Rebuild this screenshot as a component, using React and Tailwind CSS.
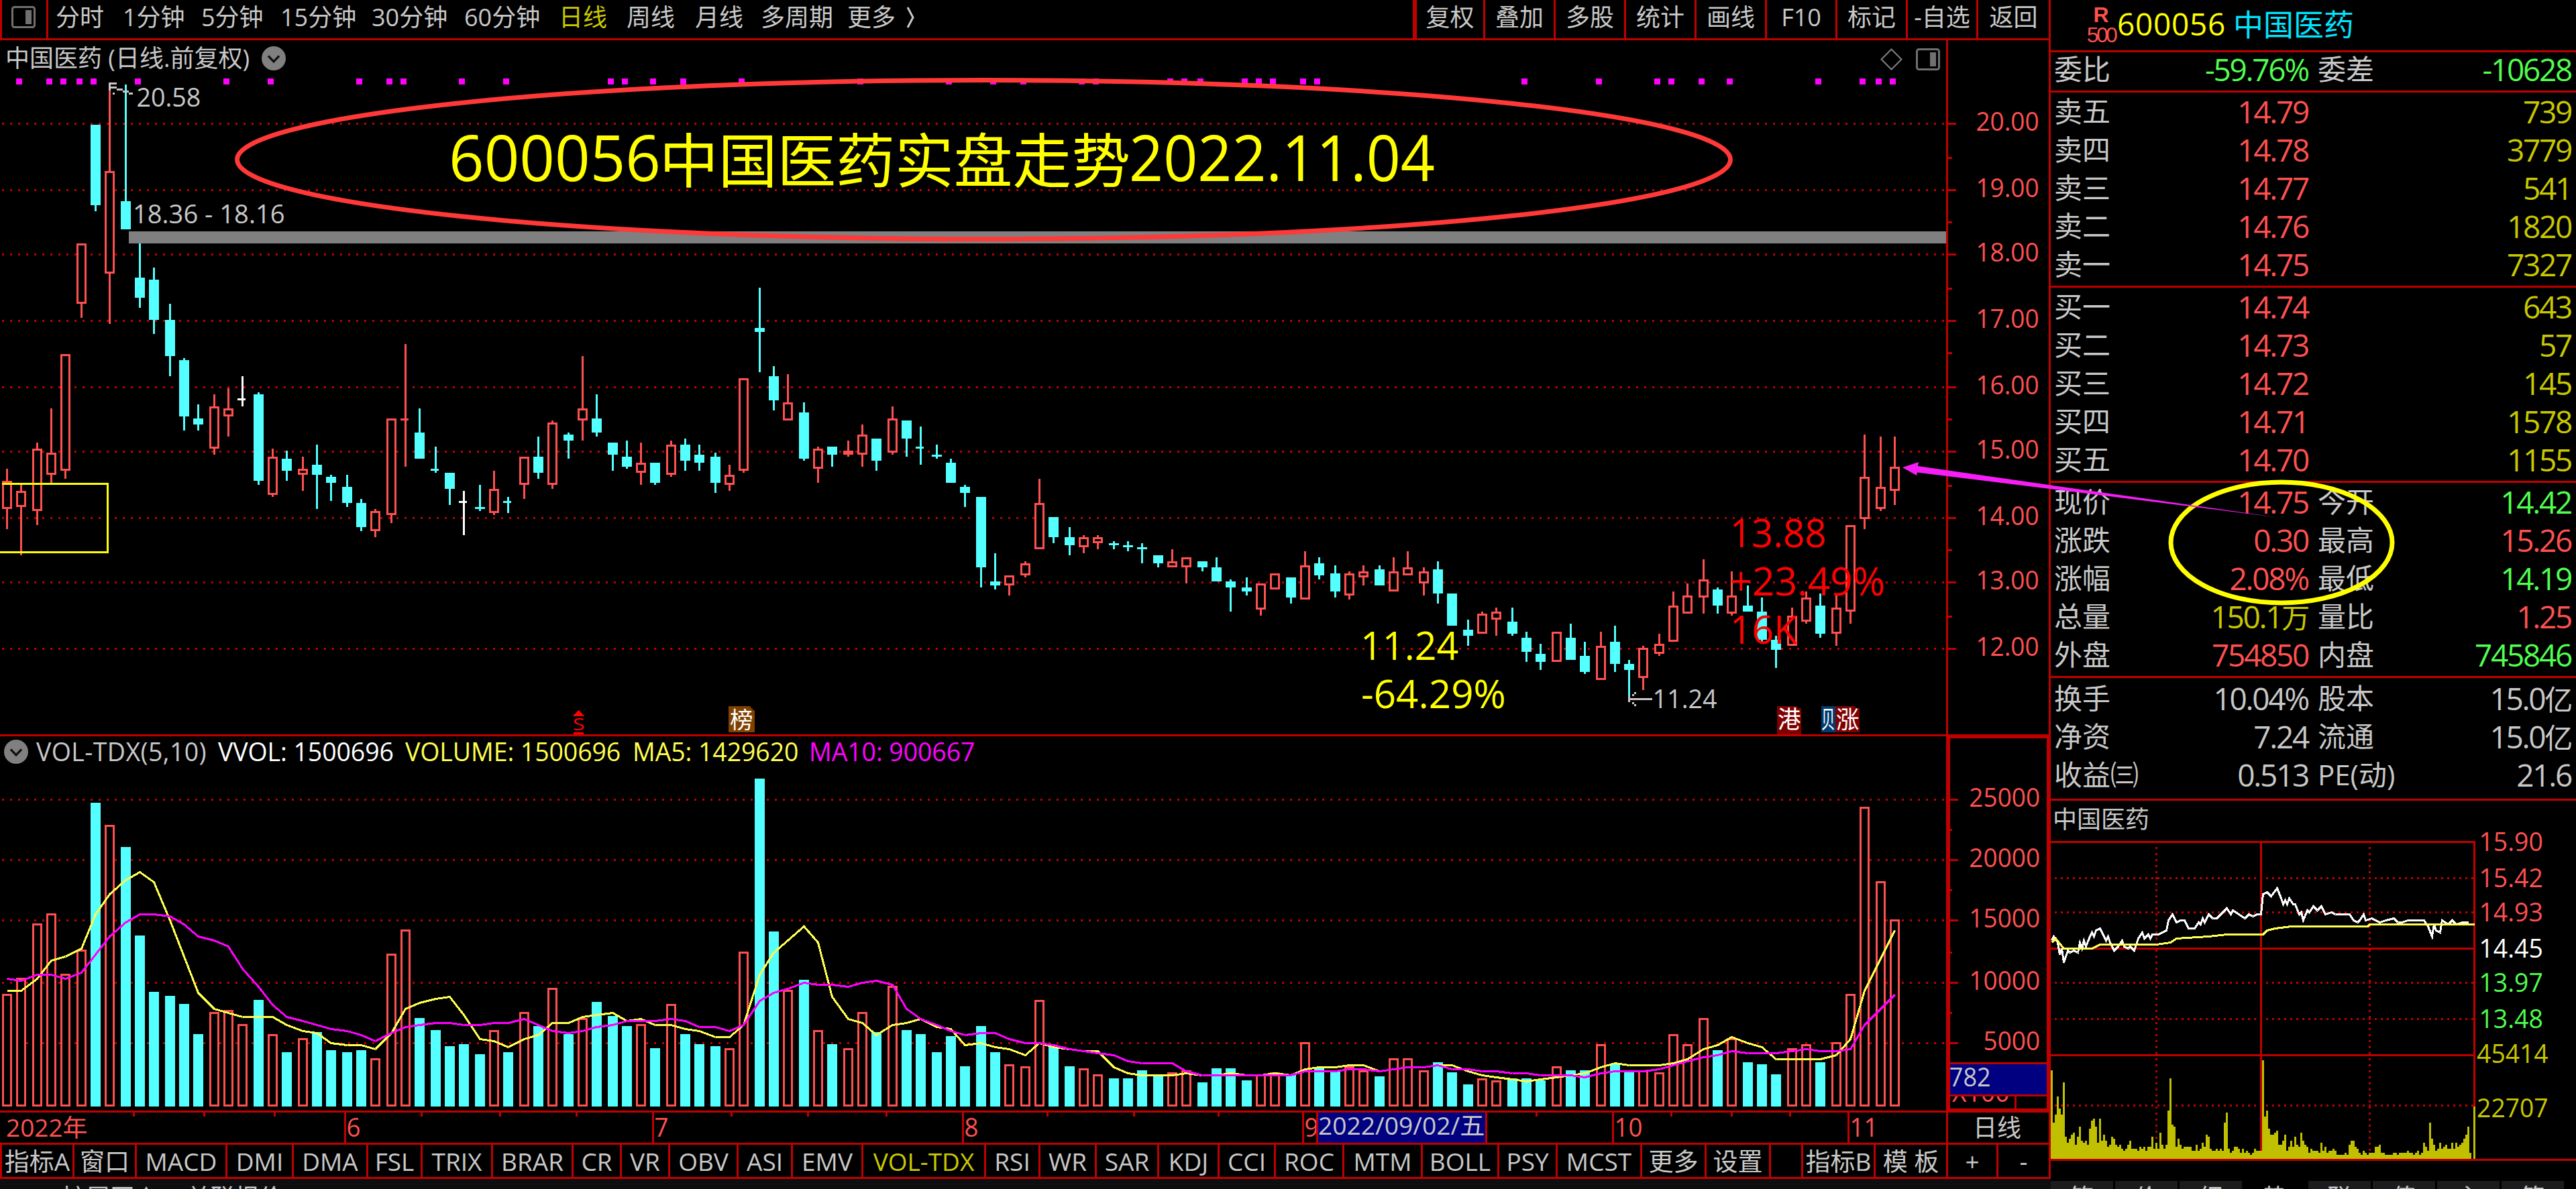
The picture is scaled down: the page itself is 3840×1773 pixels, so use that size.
// src/App.jsx
import React from 'react';

const FONT = "font-['Open_Sans','Noto_Sans_CJK_SC',sans-serif]";

const RED = '#c00000';
const UP = '#ff5050';
const DOWN = '#54ffff';
const GRAY = '#c8c8c8';

// [type, high, bodyTop, bodyBottom, low, volumeTop]
// r = up, c = down, R/C/W = doji with a short cross line
const bars = [
  ['r', 233, 239, 253, 263, 494], ['r', 241, 244, 252, 276, 486], ['r', 220, 223, 254, 261, 459],
  ['r', 203, 225, 236, 240, 454], ['r', 176, 176, 234, 238, 484], ['r', 121, 121, 151, 158, 472],
  ['c', 62, 62, 102, 105, 399], ['r', 45, 85, 136, 161, 410], ['c', 42, 100, 114, 114, 421],
  ['c', 121, 138, 148, 153, 465], ['c', 133, 139, 159, 166, 493], ['c', 151, 159, 177, 187, 495],
  ['c', 178, 179, 207, 214, 499], ['c', 201, 208, 211, 214, 514], ['r', 196, 202, 223, 226, 503],
  ['r', 193, 203, 207, 217, 502], ['W', 187, 198, 199, 202, 509], ['c', 195, 196, 239, 241, 497],
  ['r', 223, 227, 246, 247, 514], ['c', 224, 228, 234, 239, 523], ['r', 227, 233, 236, 244, 516],
  ['c', 221, 231, 236, 253, 513], ['c', 236, 237, 240, 249, 522], ['c', 236, 242, 250, 252, 523],
  ['c', 248, 250, 262, 264, 522], ['r', 253, 254, 264, 267, 526], ['r', 208, 208, 256, 260, 474],
  ['R', 171, 208, 209, 232, 462], ['c', 203, 215, 228, 228, 506], ['C', 222, 233, 234, 235, 512],
  ['c', 235, 235, 243, 251, 520], ['W', 244, 249, 250, 266, 519], ['c', 241, 252, 253, 254, 524],
  ['r', 234, 243, 255, 256, 512], ['C', 247, 249, 250, 255, 523], ['r', 227, 227, 241, 248, 503],
  ['c', 217, 227, 235, 238, 510], ['r', 209, 210, 241, 243, 491], ['c', 215, 216, 219, 228, 514],
  ['r', 177, 203, 209, 219, 506], ['c', 196, 208, 215, 217, 498], ['c', 220, 220, 226, 234, 505],
  ['c', 219, 227, 232, 233, 510], ['r', 220, 230, 235, 241, 509], ['c', 230, 230, 240, 241, 521],
  ['r', 219, 221, 236, 237, 499], ['c', 218, 221, 229, 234, 514], ['c', 221, 226, 230, 234, 519],
  ['c', 225, 227, 240, 245, 520], ['r', 231, 236, 241, 244, 521], ['r', 188, 188, 234, 235, 473],
  ['c', 143, 163, 165, 185, 387], ['c', 182, 187, 199, 204, 463], ['r', 186, 200, 209, 209, 492],
  ['c', 200, 205, 228, 229, 487], ['r', 222, 223, 233, 240, 512], ['c', 222, 222, 226, 232, 519],
  ['r', 219, 224, 226, 227, 521], ['r', 211, 216, 226, 232, 503], ['c', 218, 218, 229, 234, 513],
  ['r', 202, 208, 225, 226, 490], ['c', 209, 209, 218, 227, 512], ['C', 212, 222, 223, 231, 514],
  ['c', 221, 226, 227, 228, 523], ['c', 228, 230, 240, 240, 515], ['c', 241, 242, 245, 252, 530],
  ['c', 247, 247, 282, 292, 510], ['c', 275, 289, 291, 293, 523], ['r', 286, 286, 291, 296, 529],
  ['r', 279, 280, 286, 287, 530], ['r', 238, 250, 273, 273, 497], ['c', 257, 257, 267, 270, 520],
  ['c', 262, 267, 271, 276, 530], ['r', 266, 267, 272, 275, 531], ['r', 266, 267, 270, 273, 534],
  ['c', 269, 270, 271, 273, 536], ['c', 269, 271, 272, 274, 536], ['c', 270, 272, 273, 280, 532],
  ['c', 276, 276, 280, 282, 534], ['r', 273, 279, 282, 282, 533], ['r', 277, 277, 282, 290, 532],
  ['c', 279, 279, 282, 284, 538], ['c', 277, 282, 289, 289, 531], ['c', 288, 289, 292, 304, 531],
  ['c', 287, 292, 294, 296, 537], ['r', 290, 290, 303, 306, 534], ['r', 285, 285, 293, 293, 533],
  ['c', 287, 287, 297, 300, 534], ['r', 274, 281, 298, 298, 518], ['c', 277, 280, 286, 288, 531],
  ['c', 281, 285, 294, 297, 532], ['r', 284, 285, 296, 298, 530], ['r', 281, 284, 287, 291, 532],
  ['c', 281, 283, 291, 291, 535], ['r', 277, 284, 294, 294, 526], ['r', 274, 282, 286, 286, 526],
  ['r', 282, 284, 290, 296, 532], ['c', 279, 283, 295, 300, 528], ['c', 295, 295, 311, 311, 533],
  ['c', 308, 313, 316, 321, 539], ['r', 304, 305, 315, 315, 536], ['r', 302, 304, 308, 316, 537],
  ['c', 302, 309, 315, 316, 536], ['c', 314, 317, 324, 329, 536], ['c', 320, 325, 329, 333, 537],
  ['r', 314, 314, 329, 329, 530], ['c', 310, 317, 328, 328, 532], ['c', 319, 326, 334, 335, 532],
  ['r', 314, 321, 338, 338, 519], ['c', 311, 319, 330, 334, 529], ['c', 328, 330, 333, 346, 532],
  ['r', 321, 322, 337, 343, 532], ['r', 315, 320, 325, 326, 533], ['r', 294, 301, 319, 319, 514],
  ['r', 290, 296, 305, 305, 519], ['r', 278, 288, 297, 305, 506], ['c', 292, 293, 301, 305, 522],
  ['r', 284, 296, 305, 306, 516], ['c', 291, 301, 304, 304, 528], ['c', 297, 304, 318, 319, 529],
  ['c', 316, 318, 323, 332, 534], ['r', 302, 306, 321, 321, 521], ['r', 294, 297, 309, 310, 519],
  ['c', 295, 301, 315, 317, 528], ['r', 296, 302, 315, 321, 518], ['r', 261, 261, 304, 310, 494],
  ['r', 216, 237, 258, 263, 401], ['r', 217, 242, 253, 254, 438], ['r', 217, 232, 244, 251, 457],
];

const barX = (i) => Math.floor(3.55 + 7.3283 * i);

// The first averages need days left of the window, so they are given
const ma5Seed = [492, 492, 486, 476.5];
const ma10Seed = [485.5, 486.5, 483.5, 483.5, 485.5, 482.5, 473.5, 464.5, 457.5];

const averageLine = (n, seed) =>
  bars
    .map((_, i) => {
      const y = i < n - 1
        ? seed[i]
        : bars.slice(i - n + 1, i + 1).reduce((sum, b) => sum + b[5], 0) / n;
      return `${barX(i) + 0.5},${(Math.round(y) + 0.5).toFixed(1)}`;
    })
    .join(' ');

const signals = [
  1, 3, 4, 5, 6, 9, 15, 18, 24, 26, 27, 31, 34, 41, 42, 44, 46, 50, 58, 64, 67, 69, 73, 74, 79, 80,
  81, 84, 85, 86, 88, 89, 103, 108, 112, 113, 115, 117, 123, 126, 127, 128,
];

const priceTicks = [
  [61, '20.00'], [94, '19.00'], [126, '18.00'], [159, '17.00'], [192, '16.00'],
  [224, '15.00'], [257, '14.00'], [289, '13.00'], [322, '12.00'],
];
const priceMinor = [78, 110, 143, 175, 208, 241, 273, 306];
const volumeTicks = [[397, '25000'], [427, '20000'], [457, '15000'], [488, '10000'], [518, '5000']];
const volumeMinor = [412, 442, 473, 503];

const months = [[171, '6', 7], [324, '7', 7], [478, '8', 7], [647, '9', 7], [801, '10', 14], [918, '11', 14]];
const weekTicks = [66, 101, 136, 209, 248, 286, 363, 401, 440, 520, 563, 605, 763, 830, 860, 889];

const periods = [
  ['分时', 'w-[100px]'], ['1分钟', 'w-[117px]'], ['5分钟', 'w-[118px]'], ['15分钟', 'w-[136px]'],
  ['30分钟', 'w-[138px]'], ['60分钟', 'w-[141px]'], ['日线', 'w-[101px] text-[#c8c800]'], ['周线', 'w-[102px]'],
  ['月线', 'w-[98px]'], ['多周期', 'w-[129px]'], ['更多', 'w-[87px]'],
];
const tools = ['复权', '叠加', '多股', '统计', '画线', 'F10', '标记', '-自选', '返回'];

const tabs = [
  ['指标A', 'w-[108px]'], ['窗口', 'w-[93px]'], ['MACD', 'w-[135px]'], ['DMI', 'w-[99px]'],
  ['DMA', 'w-[111px]'], ['FSL', 'w-[81px]'], ['TRIX', 'w-[105px]'], ['BRAR', 'w-[120px]'],
  ['CR', 'w-[72px]'], ['VR', 'w-[72px]'], ['OBV', 'w-[102px]'], ['ASI', 'w-[81px]'],
  ['EMV', 'w-[105px]'], ['VOL-TDX', 'w-[183px] text-[#c8c800]'], ['RSI', 'w-[81px]'], ['WR', 'w-[84px]'],
  ['SAR', 'w-[93px]'], ['KDJ', 'w-[90px]'], ['CCI', 'w-[84px]'], ['ROC', 'w-[102px]'],
  ['MTM', 'w-[117px]'], ['BOLL', 'w-[114px]'], ['PSY', 'w-[87px]'], ['MCST', 'w-[126px]'],
  ['更多', 'w-[96px]'], ['设置', 'w-[96px]'], ['', 'w-[48px]'], ['指标B', 'w-[108px]'],
  ['模 板', 'w-[108px]'], ['+', 'w-[75px]'], ['-', 'w-[78px]'],
];

const sells = [['卖五', '14.79', '739'], ['卖四', '14.78', '3779'], ['卖三', '14.77', '541'], ['卖二', '14.76', '1820'], ['卖一', '14.75', '7327']];
const buys = [['买一', '14.74', '643'], ['买二', '14.73', '57'], ['买三', '14.72', '145'], ['买四', '14.71', '1578'], ['买五', '14.70', '1155']];

const up = 'text-[#ff5050]';
const down = 'text-[#50ff50]';
const dim = 'text-[#c8c800]';
const quotes = [
  ['现价', '14.75', up, '今开', '14.42', down],
  ['涨跌', '0.30', up, '最高', '15.26', up],
  ['涨幅', '2.08%', up, '最低', '14.19', down],
  ['总量', '150.1万', dim, '量比', '1.25', up],
  ['外盘', '754850', up, '内盘', '745846', down],
];
const basics = [
  ['换手', '10.04%', '', '股本', '15.0亿', ''],
  ['净资', '7.24', '', '流通', '15.0亿', ''],
  ['收益㈢', '0.513', '', 'PE(动)', '21.6', ''],
];

const minutePrice =
  '0,467 1,465 3,468 4,474 5,471 6,478 7,475 8,472 9,473 11,472 13,473 14,468 15,471 16,467 17,470 19,465 20,463 21,465 22,462 24,461 26,465 27,467 28,465 29,468 31,472 33,470 35,467 36,470 38,471 39,470 41,472 43,466 45,463 46,466 48,464 49,466 50,464 53,464 55,463 57,462 58,457 60,454 62,458 64,457 66,457 68,461 71,461 73,458 74,459 75,456 76,458 78,454 80,456 82,456 85,453 87,451 89,454 90,452 93,454 96,456 98,454 100,455 102,454 104,454 105,444 107,443 109,445 112,441 114,446 115,449 116,447 117,449 118,446 120,449 121,449 123,454 124,453 125,457 127,452 128,453 130,450 132,452 134,450 136,454 139,453 141,454 148,454 150,457 152,458 153,457 155,454 156,457 159,456 163,458 166,457 170,456 172,458 174,458 177,457 185,457 187,460 189,465 190,459 191,462 193,463 194,457 197,459 199,457 201,459 204,458 207,458';
const minuteAverage =
  '0,468 2,466 6,471 20,471 24,469 52,469 59,468 62,466 78,465 87,464 105,464 107,462 111,461 119,460 157,460 158,459 210,459';
const minuteVolume = [
  44, 18, 22, 31, 25, 22, 38, 11, 8, 10, 12, 13, 7, 11, 16, 9, 8, 9, 7, 15, 19, 20, 16, 8, 20, 9, 12, 9, 6, 7,
  11, 10, 7, 6, 7, 5, 4, 5, 7, 9, 5, 5, 5, 4, 6, 5, 6, 4, 6, 6, 11, 5, 8, 5, 13, 7, 5, 7, 24, 40,
  17, 16, 6, 10, 7, 5, 6, 6, 6, 6, 4, 4, 7, 4, 5, 8, 6, 12, 11, 5, 4, 4, 5, 4, 5, 4, 18, 23, 5, 3,
  4, 6, 6, 5, 3, 5, 3, 4, 3, 2, 3, 5, 4, 4, 4, 49, 21, 24, 15, 12, 12, 13, 14, 7, 7, 9, 12, 4, 6, 9,
  6, 11, 7, 6, 13, 9, 7, 6, 3, 5, 4, 4, 4, 3, 8, 4, 6, 3, 4, 4, 5, 4, 2, 2, 2, 2, 3, 2, 7, 9,
  9, 6, 5, 3, 2, 4, 3, 2, 3, 3, 3, 6, 6, 7, 3, 3, 2, 2, 2, 2, 3, 3, 2, 3, 3, 3, 3, 4, 3, 3,
  2, 3, 4, 2, 3, 8, 6, 4, 18, 10, 7, 4, 5, 8, 5, 6, 7, 5, 5, 8, 5, 8, 6, 7, 8, 10, 12, 16, 3, 0, 26,
];
const minuteLabels = [
  [418, '15.90', UP], [436, '15.42', UP], [453, '14.93', UP], [471, '14.45', '#ffffff'],
  [488, '13.97', '#50ff50'], [506, '13.48', '#50ff50'],
];

// Text with a fixed width, y is the baseline
function Label({ x, y, w, size = 12.6, color = GRAY, children }) {
  return (
    <text x={x} y={y} textLength={w} lengthAdjust="spacingAndGlyphs" fontSize={size} fill={color} stroke="none">
      {children}
    </text>
  );
}

function DottedLine({ y, x = 1, to = 967, step = 4 }) {
  return <path d={`M${x} ${y + 0.5}H${to}`} stroke={RED} strokeWidth="1" strokeDasharray={`1 ${step - 1}`} />;
}

function Candle({ i, type, high, top, bottom, low }) {
  const x = barX(i);
  const kind = type.toLowerCase();
  const color = kind === 'r' ? UP : kind === 'c' ? DOWN : '#ffffff';
  const isCross = type !== kind;
  return (
    <g fill={color}>
      {high < top && <rect x={x} y={high} width="1" height={top - high} />}
      {low > bottom && <rect x={x} y={bottom} width="1" height={low - bottom} />}
      {isCross && <rect x={x - 2} y={top} width="4" height="1" />}
      {!isCross && <Body x={x} top={top} bottom={bottom} kind={kind} />}
    </g>
  );
}

function Body({ x, top, bottom, kind }) {
  if (kind === 'c' || bottom - top <= 2) {
    return <rect x={x - 2} y={top} width="5" height={bottom - top} />;
  }
  return (
    <rect x={x - 1.5} y={top + 0.5} width="4" height={bottom - top - 1} fill="#000000" stroke={UP} strokeWidth="1" />
  );
}

function DropIcon() {
  return (
    <svg className="w-9 h-9 shrink-0" viewBox="0 0 12 12">
      <circle cx="6" cy="6" r="6" fill="#808080" />
      <path d="M3.3 4.8L6 7.6L8.7 4.8" fill="none" stroke="#101010" strokeWidth="1.1" />
    </svg>
  );
}

function PanelIcon() {
  return (
    <svg className="w-9 h-[33px] shrink-0" viewBox="0 0 12 11">
      <rect x="0.5" y="0.5" width="11" height="10" rx="1" fill="none" stroke="#707070" />
      <rect x="7" y="2" width="3" height="7" fill="#707070" />
    </svg>
  );
}

function Toolbar() {
  return (
    <div className="flex h-[60px] border-b-3 border-l-3 border-r-3 border-[#c00000] text-[36px] leading-none">
      <div className="flex w-[69px] items-center justify-center border-r-3 border-[#c00000] pb-[6px] pr-[3px]">
        <PanelIcon />
      </div>
      <div className="flex flex-1 items-center pb-[6px] pl-[11px]">
        {periods.map(([name, cls]) => (
          <span key={name} className={`${cls} whitespace-nowrap`}>{name}</span>
        ))}
        <svg className="h-10 w-4" viewBox="0 0 16 40">
          <path d="M3 5L11 20L3 35" fill="none" stroke={GRAY} strokeWidth="3" />
        </svg>
      </div>
      <div className="flex border-l-6 border-[#c00000]">
        {tools.map((name, i) => (
          <div
            key={name}
            className={`flex items-center justify-center whitespace-nowrap border-[#c00000] pb-[6px] ${i < 8 ? 'border-r-3' : ''} ${i === 0 ? 'w-[102px]' : 'w-[105px]'}`}
          >
            {name}
          </div>
        ))}
      </div>
    </div>
  );
}

function PriceChart() {
  return (
    <svg className="block h-[981px] w-[2901px] overflow-visible" viewBox="0 38 967 327" shapeRendering="crispEdges">
      {priceTicks.map(([y]) => <DottedLine key={y} y={y} />)}
      <rect x="64" y="115" width="903" height="6" fill="#808080" />
      {signals.map((i) => <rect key={i} x={barX(i) - 2} y="39" width="3" height="3" fill="#ff00ff" />)}
      {bars.map(([type, high, top, bottom, low], i) => (
        <Candle key={i} i={i} type={type} high={high} top={top} bottom={bottom} low={low} />
      ))}
      <path d="M1 240.5H53.5V274.5H0" fill="none" stroke="#ffff00" strokeWidth="1" />

      {/* High and low marks */}
      <path d="M54.5 41V45M55 41.5H58M54 43.5H58M58 44.5H61M61 45.5H64M64 46.5H66M56 46.5H57" fill="none" stroke={GRAY} />
      <Label x={67.8} y={53} w={32}>20.58</Label>
      <Label x={66} y={111} w={75.5}>18.36 - 18.16</Label>
      <path d="M809 347.5H821M809.5 346V349M811 345.5H812M811 349.5H812M812 344.5H813M812 350.5H813" fill="none" stroke={GRAY} />
      <Label x={821.2} y={352} w={32}>11.24</Label>

      <Label x={676} y={328} w={48.8} size={19.6} color="#ffff00">11.24</Label>
      <Label x={676.3} y={352} w={72} size={19.6} color="#ffff00">-64.29%</Label>
      <Label x={859.6} y={272} w={48} size={19.6} color="#ff0000">13.88</Label>
      <Label x={859.5} y={296} w={77.3} size={19.6} color="#ff0000">+23.49%</Label>
      <Label x={859.6} y={320} w={33.5} size={19.6} color="#ff0000">16K</Label>

      {/* Event badges */}
      <path d="M287.5 353L290.5 356H284.5Z" fill="#ff0000" />
      <Label x={284.6} y={363} w={6} size={8.2} color="#ff0000">S</Label>
      <path d="M285 364.5H290" stroke="#ff0000" />
      <path d="M362 351H373V352H374V353H375V364H362Z" fill="#804000" />
      <Label x={362.7} y={362} w={11.5} size={11.5} color="#ffffff">榜</Label>
      <path d="M883 351H893V352H895V365H883Z" fill="#800000" />
      <Label x={883.3} y={362} w={11.5} size={12} color="#ffffff">港</Label>
      <path d="M905 351H912V364H905Z" fill="#003c70" />
      <Label x={905} y={362} w={6.8} size={12} color="#ffffff">贝</Label>
      <path d="M912 351H922V352H924V364H912Z" fill="#800000" />
      <Label x={912.3} y={362} w={11.5} size={12} color="#ffffff">涨</Label>
    </svg>
  );
}

function PriceAxis() {
  return (
    <svg className="block h-[1035px] w-[150px]" viewBox="968 20 50 345" shapeRendering="crispEdges">
      {priceTicks.map(([y, text]) => (
        <g key={y}>
          <rect x="968" y={y} width="4" height="1" fill={RED} />
          <Label x={981.8} y={y + 4} w={31.4} color={UP}>{text}</Label>
        </g>
      ))}
      {priceMinor.map((y) => <rect key={y} x="968" y={y} width="2" height="1" fill={RED} />)}
    </svg>
  );
}

function VolumeChart() {
  return (
    <svg className="block h-[510px] w-[2901px]" viewBox="0 382 967 170" shapeRendering="crispEdges">
      {volumeTicks.map(([y]) => <DottedLine key={y} y={y} />)}
      {bars.map((bar, i) => {
        const x = barX(i);
        // Flat white day on the 16th bar closed up, the other one down
        const isUp = bar[0].toLowerCase() === 'r' || i === 16;
        return isUp ? (
          <rect key={i} x={x - 1.5} y={bar[5] + 0.5} width="4" height={549 - bar[5]} fill="#000000" stroke={UP} strokeWidth="1" />
        ) : (
          <rect key={i} x={x - 2} y={bar[5]} width="5" height={550 - bar[5]} fill={DOWN} />
        );
      })}
      <polyline points={averageLine(5, ma5Seed)} fill="none" stroke="#ffff50" strokeWidth="1" />
      <polyline points={averageLine(10, ma10Seed)} fill="none" stroke="#ff00ff" strokeWidth="1" />
    </svg>
  );
}

function VolumeAxis() {
  return (
    <svg className="block h-[552px] w-[144px]" viewBox="969 367 48 184" shapeRendering="crispEdges">
      {volumeTicks.map(([y, text]) => (
        <g key={y}>
          <rect x="969" y={y} width="4" height="1" fill={RED} />
          <Label x={1013.7 - text.length * 7.05} y={y + 4} w={text.length * 7.05} color={UP}>{text}</Label>
        </g>
      ))}
      {volumeMinor.map((y) => <rect key={y} x="969" y={y} width="1" height="1" fill={RED} />)}
      <Label x={970} y={547.6} w={28.5} color={UP}>X100</Label>
      <rect x="969" y="528" width="48" height="17" fill="#000080" />
      <path d="M969 528.5H1017M969 544.5H1017M1001.5 545V551" stroke={RED} />
      <Label x={968.6} y={540} w={20.6}>782</Label>
    </svg>
  );
}

function TimeAxis() {
  return (
    <svg className="block h-[45px] w-[2901px] overflow-visible" viewBox="0 553 967 15" shapeRendering="crispEdges">
      {weekTicks.map((x) => <rect key={x} x={x} y="553" width="1" height="2" fill={RED} />)}
      {months.map(([x, text, w]) => (
        <g key={x}>
          <rect x={x} y="553" width="1" height="15" fill={RED} />
          <Label x={x + 1.2} y={565} w={w} color={UP}>{text}</Label>
        </g>
      ))}
      <Label x={3} y={565} w={40.5} size={12.2} color={UP}>2022年</Label>
      <rect x="654" y="553" width="85" height="15" fill={RED} />
      <rect x="655" y="553" width="83" height="15" fill="#000080" />
      <Label x={655} y={564} w={82.8} size={12.2}>2022/09/02/五</Label>
    </svg>
  );
}

function QuoteRow({ left, value, valueClass, right, rightValue, rightClass }) {
  return (
    <div className="flex h-[57px] items-center whitespace-nowrap pb-[2px] text-[42px] leading-none">
      <span className="w-[146px] pl-[5px]">{left}</span>
      <Num className={`w-[238px] ${valueClass}`}>{value}</Num>
      <span className="w-[150px] pl-[14px]">{right}</span>
      <Num className={`w-[242px] ${rightClass}`}>{rightValue}</Num>
    </div>
  );
}

// Digits are a bit taller than the Chinese text next to them
function Num({ className, children }) {
  const unit = children.match(/[万亿]$/);
  return (
    <span className={`${className} text-right text-[46px] tracking-[-2.3px]`}>
      {unit ? children.slice(0, -1) : children}
      {unit && <span className="text-[42px]">{unit[0]}</span>}
    </span>
  );
}

function MinuteChart() {
  return (
    <svg className="block h-[480px] w-[783px] overflow-visible" viewBox="1019 417 261 160" shapeRendering="crispEdges">
      {[436, 453, 488, 506, 549].map((y) => <DottedLine key={y} y={y} x={1021} to={1229} step={3} />)}
      {[1071, 1177].map((x) => (
        <path key={x} d={`M${x + 0.5} 421V576`} stroke={RED} strokeDasharray="1 2" />
      ))}
      <path d="M1019 418.5H1230M1229.5 418V576M1019 471.5H1230M1019 524.5H1230M1123.5 418V576" fill="none" stroke={RED} />
      {minuteVolume.map((h, k) => (
        <rect key={k} x={1019 + k} y={576 - h} width="1" height={h} fill="#c0c000" />
      ))}
      <g transform="translate(1019.5 0.5)" fill="none" strokeWidth="1">
        <polyline points={minutePrice} stroke="#ffffff" />
        <polyline points={minuteAverage} stroke="#ffff50" />
      </g>
      <path d="M1019 576.5H1280" stroke={RED} />
      {minuteLabels.map(([y, text, color]) => (
        <Label key={y} x={1231.8} y={y + 4.9} w={31.8} color={color}>{text}</Label>
      ))}
      <Label x={1230.7} y={528.2} w={35.5} color="#c8c800">45414</Label>
      <Label x={1230.7} y={555.2} w={35.5} color="#c8c800">22707</Label>
    </svg>
  );
}

function QuotePanel() {
  return (
    <div className="flex w-[783px] flex-col">
      <div className="flex h-[78px] items-center border-b-3 border-[#c00000] pl-[51px] leading-none">
        <div className="flex w-[48px] flex-col items-center pb-[2px] text-[#ff5050]">
          <span className="text-[32px] font-bold leading-[30px] font-['Liberation_Sans',sans-serif]">R</span>
          <span className="text-[32px] leading-[30px] tracking-[-3.6px] font-['Liberation_Sans',sans-serif]">500</span>
        </div>
        <span className="pb-[6px] text-[46px] tracking-[0.7px] text-[#ffff00]">600056</span>
        <span className="pb-[2px] pl-[11px] text-[45px] text-[#00e4ff]">中国医药</span>
      </div>
      <div className="flex h-[60px] items-end border-b-3 border-[#c00000] pb-[3px]">
        <QuoteRow left="委比" value="-59.76%" valueClass={down} right="委差" rightValue="-10628" rightClass={down} />
      </div>
      <div className="h-[291px] border-b-3 border-[#c00000]">
        {sells.map(([name, price, amount]) => (
          <QuoteRow key={name} left={name} value={price} valueClass={up} right="" rightValue={amount} rightClass={dim} />
        ))}
      </div>
      <div className="h-[291px] border-b-3 border-[#c00000]">
        {buys.map(([name, price, amount]) => (
          <QuoteRow key={name} left={name} value={price} valueClass={up} right="" rightValue={amount} rightClass={dim} />
        ))}
      </div>
      <div className="h-[291px] border-b-3 border-[#c00000]">
        {quotes.map(([a, b, c, d, e, f]) => (
          <QuoteRow key={a} left={a} value={b} valueClass={c} right={d} rightValue={e} rightClass={f} />
        ))}
      </div>
      <div className="h-[183px] border-b-3 border-[#c00000] pt-[2px]">
        {basics.map(([a, b, c, d, e, f]) => (
          <QuoteRow key={a} left={a} value={b} valueClass={c} right={d} rightValue={e} rightClass={f} />
        ))}
      </div>
      <div className="flex h-[57px] items-center pl-[3px] pb-[1px] text-[36px] leading-none">中国医药</div>
      <MinuteChart />
      <div className="mt-[30px] flex h-[12px] gap-[3px] overflow-hidden text-[36px]">
        {['笔', '价', '细', '势', '联', '值', '主', '筹'].map((name) => (
          <div
            key={name}
            className={`flex h-[60px] w-[93px] shrink-0 justify-center pt-[7px] leading-none ${name === '势' ? 'bg-black' : 'bg-[#1c1c1e]'}`}
          >
            {name}
          </div>
        ))}
      </div>
    </div>
  );
}

// Hand drawn marks lying over the whole window
function Annotations() {
  return (
    <svg className="pointer-events-none absolute inset-0 h-[1773px] w-[3840px]" viewBox="0 0 3840 1773">
      <ellipse cx="1466.5" cy="238" rx="1113" ry="118.5" fill="none" stroke="#ff3838" strokeWidth="7" />
      <Label x={669} y={270} w={316} size={96} color="#ffff00">600056</Label>
      <Label x={983} y={272} w={702} size={88} color="#ffff00">中国医药实盘走势</Label>
      <Label x={1683} y={270} w={456} size={96} color="#ffff00">2022.11.04</Label>
      <ellipse cx="3401" cy="809" rx="165" ry="90" fill="none" stroke="#ffff00" strokeWidth="7" />
      <path d="M2836 697L2860 689L2859 695L3040 721L3395 771.5L3040 727L2858 704.5L2857 709Z" fill="#f51ef5" />
    </svg>
  );
}

function App() {
  return (
    <div className={`relative flex h-[1773px] w-[3840px] overflow-hidden bg-black text-[#c8c8c8] ${FONT}`}>
      <div className="flex w-[3057px] flex-col">
        <Toolbar />

        {/* Price */}
        <div className="flex h-[1035px]">
          <div className="w-[2901px]">
            <div className="flex h-[54px] items-center justify-between pl-[8px] pr-[9px] text-[36px] leading-none">
              <div className="flex items-center gap-[18px]">
                <span>中国医药 (日线.前复权)</span>
                <DropIcon />
              </div>
              <div className="flex items-center gap-[20px] pt-[3px]">
                <svg className="h-[33px] w-[33px]" viewBox="0 0 33 33">
                  <path d="M16.5 1.5L31.5 16.5L16.5 31.5L1.5 16.5Z" fill="none" stroke="#808080" strokeWidth="2" />
                </svg>
                <PanelIcon />
              </div>
            </div>
            <PriceChart />
          </div>
          <div className="w-[156px] border-x-3 border-[#c00000]">
            <PriceAxis />
          </div>
        </div>

        {/* Volume */}
        <div className="flex h-[564px]">
          <div className="w-[2901px] border-y-3 border-[#c00000]">
            <div className="flex h-[48px] items-center gap-[17px] whitespace-nowrap pl-[6px] pb-[2px] text-[37.5px] leading-none">
              <span className="flex items-center gap-[12px]">
                <DropIcon />
                <span className="w-[254px] tracking-[0.4px]">VOL-TDX(5,10)</span>
              </span>
              <span className="w-[262px] tracking-[-0.1px] text-white">VVOL: 1500696</span>
              <span className="w-[322px] tracking-[-0.1px] text-[#ffff50]">VOLUME: 1500696</span>
              <span className="w-[246px] tracking-[-0.1px] text-[#ffff50]">MA5: 1429620</span>
              <span className="tracking-[-0.1px] text-[#ff00ff]">MA10: 900667</span>
            </div>
            <VolumeChart />
          </div>
          <div className="w-[156px] border-6 border-[#c00000]">
            <VolumeAxis />
          </div>
        </div>

        <div className="flex h-[48px] border-b-3 border-[#c00000]">
          <TimeAxis />
          <div className="flex w-[156px] items-center justify-center border-x-3 border-[#c00000] pr-[4px] text-[36px] leading-none">日线</div>
        </div>

        {/* Indicator tabs */}
        <div className="flex h-[51px] border-b-3 border-l-3 border-[#c00000] text-[37px] leading-none">
          {tabs.map(([name, cls]) => (
            <div key={name} className={`flex items-center justify-center whitespace-nowrap border-r-3 border-[#c00000] ${cls}`}>
              {name}
            </div>
          ))}
        </div>
        <div className="flex h-[15px] gap-[42px] overflow-hidden bg-[#0e0e10] pl-[92px] pt-[10px] text-[36px] leading-none">
          <span>扩展区▲</span>
          <span>关联报价</span>
        </div>
      </div>

      <QuotePanel />
      <Annotations />
    </div>
  );
}

export default App;
